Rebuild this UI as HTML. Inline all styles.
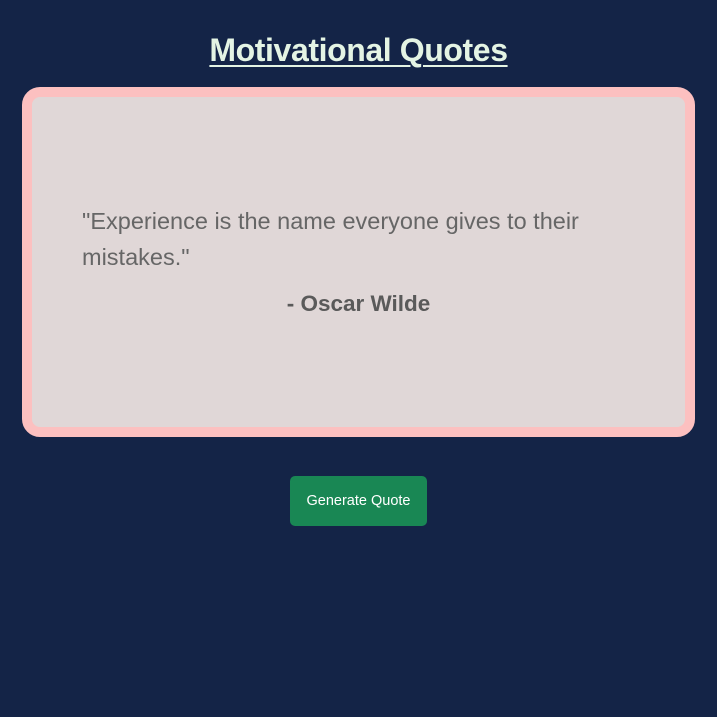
<!DOCTYPE html>
<html><head><style>
body{margin:0;width:717px;height:717px;background:#142447;font-family:"Liberation Sans",sans-serif;}
h1{margin:0;position:absolute;top:32px;left:0;width:717px;text-align:center;font-size:32px;font-weight:bold;color:#e4f4e4;text-decoration:underline;text-decoration-thickness:2px;text-underline-offset:4px;letter-spacing:-0.4px}
.card{position:absolute;left:22px;top:87px;width:653px;height:330px;border:10px solid #fcc0c0;border-radius:18px;background:#e0d7d7}
.q{position:absolute;left:50px;top:106px;width:560px;font-size:23.5px;line-height:36px;color:#666}
.a{position:absolute;left:0;width:653px;top:194px;text-align:center;font-size:22.5px;font-weight:bold;color:#5a5a5a}
.btn{position:absolute;left:290px;top:476px;width:137px;height:50px;background:#198754;border-radius:5px;color:#fff;font-size:14.5px;line-height:50px;text-align:center}
</style></head><body>
<h1>Motivational Quotes</h1>
<div class="card">
<div class="q">"Experience is the name everyone gives to their mistakes."</div>
<div class="a">- Oscar Wilde</div>
</div>
<div class="btn">Generate Quote</div>
</body></html>
